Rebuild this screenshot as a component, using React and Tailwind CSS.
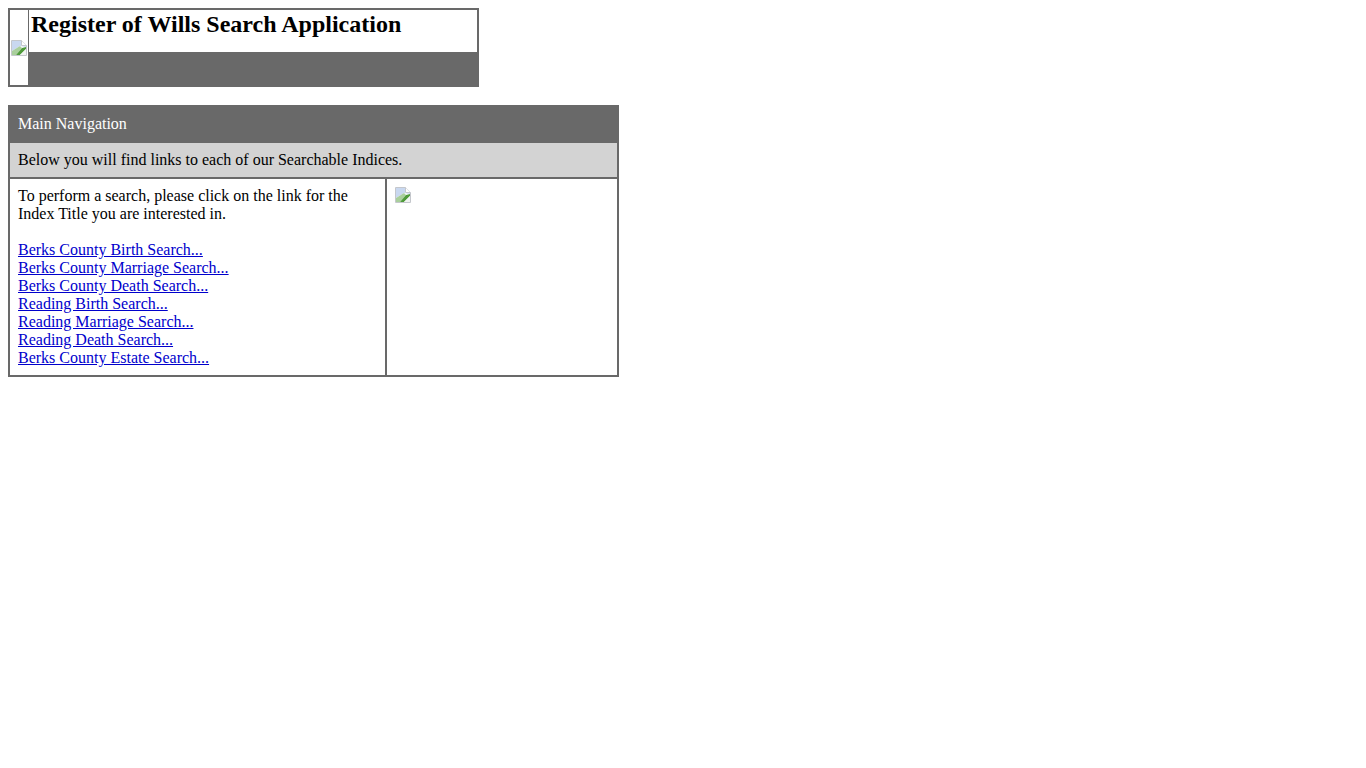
const links = [
  "Berks County Birth Search...",
  "Berks County Marriage Search...",
  "Berks County Death Search...",
  "Reading Birth Search...",
  "Reading Marriage Search...",
  "Reading Death Search...",
  "Berks County Estate Search...",
];

function BrokenImage() {
  return (
    <svg width="16" height="16" viewBox="0 0 16 16" className="block">
      <path d="M0.5 0.5H10.5L15.5 5.5V15.5H0.5Z" fill="#ffffff" stroke="#c4c7cc" />
      <path d="M1 1H10V6H15V7L9 6L1 11Z" fill="#c9d8f0" />
      <path d="M10.5 0.5V5.5H15.5" fill="#ffffff" stroke="#c4c7cc" />
      <path d="M1 15V11L9 6L11 8L5 15Z" fill="#a9cf9c" />
      <path d="M5 15L11 8L15 7V9L9 15Z" fill="#4f9a3a" />
      <path d="M9 15L15 9V15Z" fill="#f1f3f1" />
    </svg>
  );
}

export default function App() {
  return (
    <div className="min-h-screen bg-white p-2 font-['Liberation_Serif',serif] text-base leading-[18px] text-black">
      <div className="flex h-[79px] w-[471px] border-2 border-[#696969]">
        <div className="flex w-[18px] items-center pl-px">
          <BrokenImage />
        </div>
        <div className="flex flex-1 flex-col">
          <h1 className="h-[42px] border-l border-[#696969] pl-[2px] pt-px text-2xl leading-[27px] font-bold">
            Register of Wills Search Application
          </h1>
          <div className="flex-1 bg-[#696969]" />
        </div>
      </div>

      <div className="mt-[18px] w-[611px] border-2 border-[#696969]">
        <div className="h-[36px] bg-[#696969] px-2 pt-2 text-white">Main Navigation</div>
        <div className="h-[36px] border-b-2 border-[#696969] bg-[#d3d3d3] px-2 pt-2">
          Below you will find links to each of our Searchable Indices.
        </div>
        <div className="flex h-[196px]">
          <div className="w-[377px] border-r-2 border-[#696969] px-2 pt-2">
            <p>
              To perform a search, please click on the link for the
              <br />
              Index Title you are interested in.
            </p>
            <ul className="mt-[18px]">
              {links.map((label) => (
                <li key={label}>
                  <a href="#" className="text-[#0000cc] underline">{label}</a>
                </li>
              ))}
            </ul>
          </div>
          <div className="flex-1 px-2 pt-2">
            <BrokenImage />
          </div>
        </div>
      </div>
    </div>
  );
}
